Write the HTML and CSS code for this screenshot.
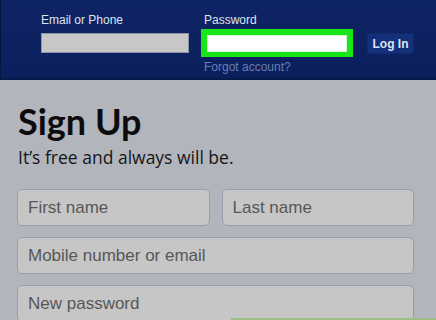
FILE: index.html
```html
<!DOCTYPE html>
<html lang="en">
<head>
    <meta charset="UTF-8">
    <meta name="viewport" content="width=device-width, initial-scale=1.0">
    <title>Sign Up</title>
    <link rel="stylesheet" href="styles.css">
</head>
<body>
    <div class="topbar">
        <div class="login">
            <div class="field email">
                <label>Email or Phone</label>
                <input type="text" class="login-input">
            </div>
            <div class="field pass">
                <label>Password</label>
                <div class="highlight">
                    <input type="password" class="login-input white">
                </div>
                <a href="#" class="forgot">Forgot account?</a>
            </div>
            <button class="login-btn">Log In</button>
        </div>
    </div>
    <div class="signup">
        <h1>Sign Up</h1>
        <p class="tagline">It’s free and always will be.</p>
        <div class="row">
            <input type="text" class="box" placeholder="First name">
            <input type="text" class="box" placeholder="Last name">
        </div>
        <input type="text" class="box" placeholder="Mobile number or email">
        <input type="password" class="box" placeholder="New password">
        <div class="green-bar"></div>
    </div>
</body>
</html>
```

FILE: styles.css
```css
body {
    margin: 0;
    padding: 0;
    width: 436px;
    height: 320px;
    overflow: hidden;
    background-color: #b3b5bc;
    font-family: "Liberation Sans", Arial, sans-serif;
}
.topbar {
    height: 78px;
    background: linear-gradient(#0f2465, #0b1f5d);
    border-bottom: 2px solid #07184a;
    border-left: 1px solid #06153f;
}
.login {
    display: flex;
    align-items: flex-start;
    padding: 12px 0 0 40px;
}
.field {
    display: flex;
    flex-direction: column;
}
.field label {
    color: #dfe3ee;
    font-size: 12px;
    line-height: 16px;
    margin-bottom: 5px;
}
.email {
    width: 148px;
}
.login-input {
    box-sizing: border-box;
    width: 148px;
    height: 20px;
    margin: 0;
    background-color: #c7c7c7;
    border: 1px solid #8d93a8;
    border-radius: 0;
}
.pass {
    margin-left: 12px;
}
.pass label {
    margin-left: 3px;
    margin-bottom: 1px;
}
.highlight {
    box-sizing: border-box;
    width: 152px;
    height: 28px;
    background-color: #19e519;
    padding: 5px 6px;
}
.login-input.white {
    width: 140px;
    height: 17px;
    background-color: #fff;
    border: 1px solid #d8f0d8;
}
.forgot {
    color: #6a7eae;
    font-size: 12px;
    line-height: 16px;
    margin: 2px 0 0 3px;
    text-decoration: none;
}
.login-btn {
    margin: 21px 0 0 14px;
    width: 47px;
    height: 21px;
    padding: 0;
    background-color: #14307a;
    color: #dde3f0;
    font-family: "Liberation Sans", Arial, sans-serif;
    font-weight: bold;
    font-size: 12px;
    border: 1px solid #102a6c;
    border-radius: 2px;
}
.signup {
    position: relative;
    display: flex;
    flex-direction: column;
    padding: 0 22px 0 17px;
}
h1 {
    margin: 19px 0 0 1px;
    font-family: Lato, "Open Sans", sans-serif;
    font-weight: bold;
    font-size: 36px;
    line-height: 44px;
    color: #0c0c0e;
}
.tagline {
    margin: 2px 0 0 1px;
    font-family: "Open Sans", sans-serif;
    font-size: 17.5px;
    line-height: 24px;
    color: #141518;
    letter-spacing: 0;
}
.row {
    display: flex;
    gap: 12px;
    margin-top: 20px;
}
.box {
    box-sizing: border-box;
    width: 100%;
    height: 37px;
    margin: 0 0 11px 0;
    padding: 0 10px;
    background-color: #c6c6c6;
    border: 1px solid #989eb0;
    border-radius: 5px;
    font-family: "Liberation Sans", Arial, sans-serif;
    font-size: 17px;
    color: #555;
}
.row .box {
    flex: 1;
    min-width: 0;
}
.box::placeholder {
    color: #575757;
}
.green-bar {
    position: absolute;
    left: 231px;
    right: 0;
    top: 238px;
    height: 4px;
    background-color: #9cbd84;
}
```
